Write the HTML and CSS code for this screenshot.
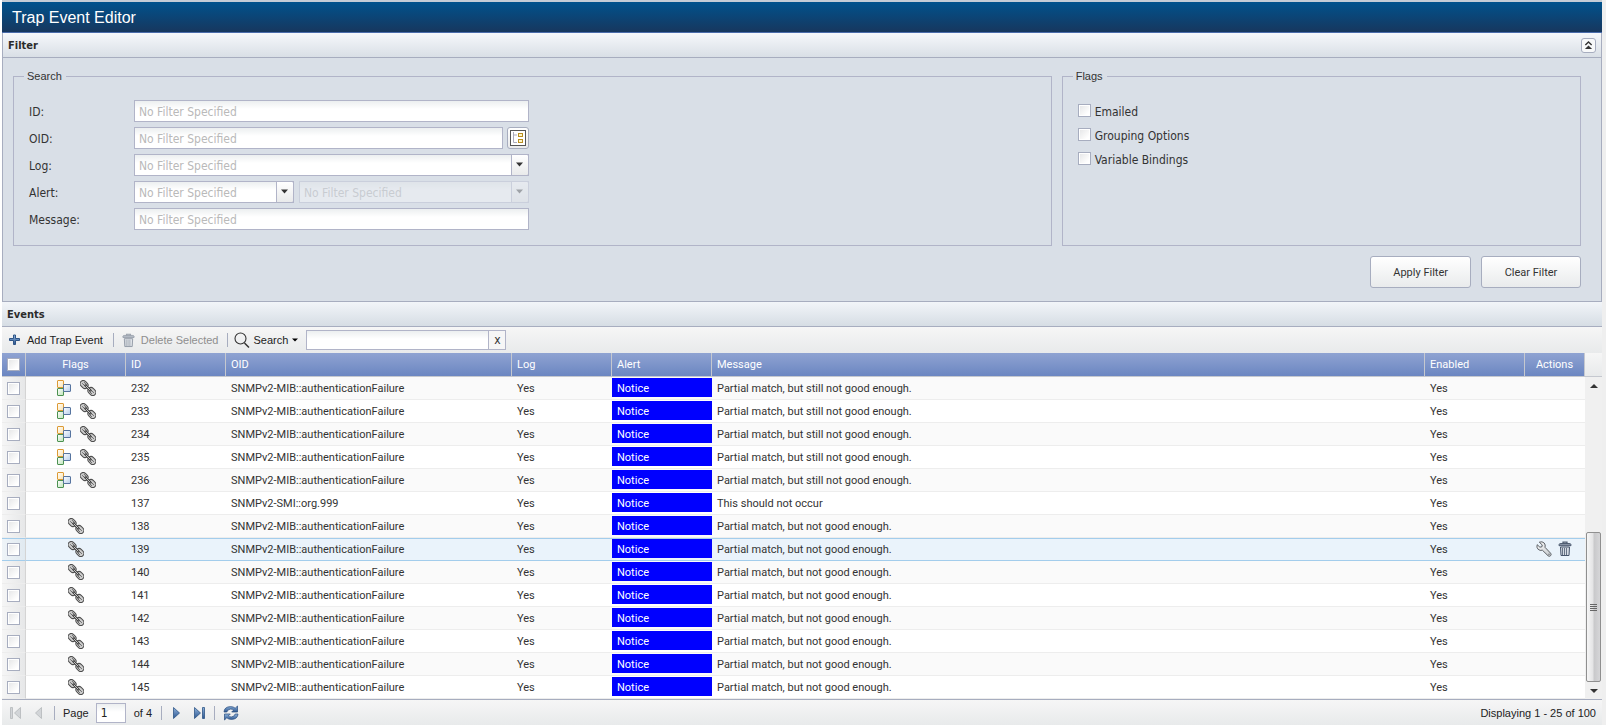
FILE: index.html
```
<!DOCTYPE html>
<html lang="en">
<head>
<meta charset="utf-8">
<title>Trap Event Editor</title>
<link rel="stylesheet" href="styles.css">
</head>
<body>
<svg class="defs" aria-hidden="true">
  <defs>
    <linearGradient id="g-steel" x1="0" y1="0" x2="0" y2="1"><stop offset="0" stop-color="#8fb3dc"/><stop offset="1" stop-color="#2c5690"/></linearGradient>
    <linearGradient id="g-metal" x1="0" y1="0" x2="1" y2="1"><stop offset="0" stop-color="#fdfdfd"/><stop offset="1" stop-color="#c4c8cc"/></linearGradient>
    <linearGradient id="g-blue" x1="0" y1="0" x2="1" y2="1"><stop offset="0" stop-color="#fff"/><stop offset="1" stop-color="#b5cdea"/></linearGradient>
    <linearGradient id="g-green" x1="0" y1="0" x2="1" y2="1"><stop offset="0" stop-color="#fff"/><stop offset="1" stop-color="#bfe3bb"/></linearGradient>
    <linearGradient id="g-gold" x1="0" y1="0" x2="1" y2="1"><stop offset="0" stop-color="#fff"/><stop offset="1" stop-color="#fbe3ae"/></linearGradient>
  </defs>
  <symbol id="i-group" viewBox="0 0 16 16">
    <rect x="1.500" y=".5" width="6" height="7" rx=".5" fill="url(#g-gold)" stroke="#dc9a35"/>
    <rect x="1.500" y="8.500" width="6" height="7" rx=".5" fill="url(#g-green)" stroke="#4b9150"/>
    <rect x="7.500" y="4.500" width="7" height="7" rx=".5" fill="url(#g-blue)" stroke="#56749f"/>
  </symbol>
  <symbol id="i-chain" viewBox="0 0 16 16">
    <g fill="#cdcdcd" stroke="#4e4e4e">
      <rect x="-.2" y="1.400" width="8.600" height="6.200" rx="3.100" transform="rotate(45 4.100 4.500)"/>
      <rect x="7.600" y="8.400" width="8.600" height="6.200" rx="3.100" transform="rotate(45 11.900 11.500)"/>
    </g>
    <g fill="none" stroke="#5c5c5c" stroke-width=".9">
      <path d="M2.200 3.300l3.400 3.200M4 2.100l2.800 2.900M10.200 9.500l3.700 3.300M9.300 11.300l2.600 2.600"/>
    </g>
    <path d="M5.500 5.500l5 5" stroke="#3f3f3f" stroke-width="2.400" stroke-linecap="round"/>
    <path d="M6 6l4 4" stroke="#d6d6d6" stroke-width=".9" stroke-linecap="round"/>
  </symbol>
  <symbol id="i-trash" viewBox="0 0 14 16">
    <path d="M5 2.500V1.200h4v1.300" fill="none" stroke="#4d5b6f" stroke-width="1.200"/>
    <path d="M1 3.700Q1 2.500 3 2.500h8q2 0 2 1.200v1H1z" fill="#8793a4" stroke="#46546a" stroke-width=".9"/>
    <path d="M2.500 6h9l-.5 8.500H3z" fill="#d5dbe3" stroke="#46546a"/>
    <path d="M4.500 7v7M6.500 7v7M8.500 7v7" stroke="#5a677b" stroke-width=".9"/>
  </symbol>
  <symbol id="i-wrench" viewBox="0 0 16 16">
    <path d="M3.300 1.200Q6.200 0 8.200 2 9.800 3.900 9 6.300l5.600 5.900q1.100 1.300 0 2.500t-2.500.1L6.400 9.200Q4 10 2.100 8.300.2 6.400 1.200 3.700L3.900 6.200 6 5.700 6.200 3.900z" fill="url(#g-metal)" stroke="#5c6065"/>
    <circle cx="13" cy="13.200" r=".7" fill="#65696e"/>
  </symbol>
  <symbol id="i-caret" viewBox="0 0 8 5"><path d="M0 .5h7L3.500 4.500z" fill="currentColor"/></symbol>
</svg>

<header class="titlebar"><h1>Trap Event Editor</h1></header>

<form class="filter">
  <div class="panel-head">
    <h2>Filter</h2>
    <button type="button" class="collapse" aria-label="Collapse filter">
      <svg width="9" height="11" viewBox="0 0 10 11"><path d="M1.500 5L5 1.600 8.500 5" fill="none" stroke="#333" stroke-width="1.500"/><path d="M1 9.500L5 5.500 9 9.500z" fill="#333"/></svg>
    </button>
  </div>
  <div class="filter-body">
    <div class="groups">
      <fieldset>
        <legend>Search</legend>
        <div class="fields">
          <label for="f-id">ID:</label>
          <div class="field"><input id="f-id" class="box" type="text" placeholder="No Filter Specified"></div>
          <label for="f-oid">OID:</label>
          <div class="field">
            <input id="f-oid" class="box" type="text" placeholder="No Filter Specified">
            <button type="button" class="tree" aria-label="Browse OID tree">
              <svg width="16" height="16" viewBox="0 0 16 16"><rect x=".5" y=".5" width="15" height="15" fill="#fff" stroke="#555"/><path d="M3.500 2v10.500H7M3.500 5H7" fill="none" stroke="#aab"/><rect x="8.500" y="3.500" width="4" height="3" fill="#fff6c8" stroke="#b98e22"/><rect x="8.500" y="9.500" width="4" height="3" fill="#fff6c8" stroke="#b98e22"/></svg>
            </button>
          </div>
          <label for="f-log">Log:</label>
          <div class="field">
            <div class="combo"><select id="f-log" class="box"><option>No Filter Specified</option></select><span class="trigger"><svg width="8" height="5"><use href="#i-caret"/></svg></span></div>
          </div>
          <label for="f-alert">Alert:</label>
          <div class="field">
            <div class="combo combo-short"><select id="f-alert" class="box"><option>No Filter Specified</option></select><span class="trigger"><svg width="8" height="5"><use href="#i-caret"/></svg></span></div>
            <div class="combo off"><select class="box" aria-label="Alert value" disabled><option>No Filter Specified</option></select><span class="trigger"><svg width="8" height="5"><use href="#i-caret"/></svg></span></div>
          </div>
          <label for="f-msg">Message:</label>
          <div class="field"><input id="f-msg" class="box" type="text" placeholder="No Filter Specified"></div>
        </div>
      </fieldset>
      <fieldset>
        <legend>Flags</legend>
        <div class="checks">
          <label><input type="checkbox" class="check">Emailed</label>
          <label><input type="checkbox" class="check">Grouping Options</label>
          <label><input type="checkbox" class="check">Variable Bindings</label>
        </div>
      </fieldset>
    </div>
    <div class="actions">
      <button type="button" class="btn">Apply Filter</button>
      <button type="button" class="btn">Clear Filter</button>
    </div>
  </div>
</form>

<main class="events">
  <div class="events-head"><h2>Events</h2></div>
  <div class="toolbar">
    <button type="button" class="tool">
      <svg width="12" height="12" viewBox="0 0 12 12"><path d="M4.500 1h2v3.500h4v2h-4v4h-2v-4h-4v-2h4z" fill="url(#g-steel)" stroke="#2f5586"/></svg>
      Add Trap Event
    </button>
    <span class="sep"></span>
    <button type="button" class="tool" disabled><svg width="13" height="15"><use href="#i-trash"/></svg>Delete Selected</button>
    <span class="sep"></span>
    <button type="button" class="tool tool-search">
      <svg width="16" height="17" viewBox="0 0 16 17"><circle cx="6.500" cy="6.500" r="5.500" fill="none" stroke="#333" stroke-width="1.100"/><path d="M10.500 11l4.500 4.500" stroke="#333" stroke-width="1.500"/></svg>
      Search
      <svg class="caret" width="6" height="4" viewBox="0 0 6 4"><path d="M0 .5h6L3 3.500z"/></svg>
    </button>
    <div class="quick"><input type="text" aria-label="Search events"><button type="button" aria-label="Clear search">x</button></div>
  </div>

  <div class="grid">
    <table>
      <colgroup><col class="c-check"><col class="c-std"><col class="c-std"><col class="c-oid"><col class="c-std"><col class="c-std"><col><col class="c-std"><col class="c-act"></colgroup>
      <thead>
        <tr><th><input type="checkbox" class="check" aria-label="Select all"></th><th class="mid">Flags</th><th>ID</th><th>OID</th><th>Log</th><th>Alert</th><th>Message</th><th>Enabled</th><th class="mid">Actions</th></tr>
      </thead>
      <tbody>
        <tr><td><input type="checkbox" class="check" aria-label="Select 232"></td><td><div class="flags"><svg width="16" height="16"><use href="#i-group"/></svg><svg width="16" height="16"><use href="#i-chain"/></svg></div></td><td>232</td><td>SNMPv2-MIB::authenticationFailure</td><td>Yes</td><td><span class="notice">Notice</span></td><td>Partial match, but still not good enough.</td><td>Yes</td><td></td></tr>
        <tr><td><input type="checkbox" class="check" aria-label="Select 233"></td><td><div class="flags"><svg width="16" height="16"><use href="#i-group"/></svg><svg width="16" height="16"><use href="#i-chain"/></svg></div></td><td>233</td><td>SNMPv2-MIB::authenticationFailure</td><td>Yes</td><td><span class="notice">Notice</span></td><td>Partial match, but still not good enough.</td><td>Yes</td><td></td></tr>
        <tr><td><input type="checkbox" class="check" aria-label="Select 234"></td><td><div class="flags"><svg width="16" height="16"><use href="#i-group"/></svg><svg width="16" height="16"><use href="#i-chain"/></svg></div></td><td>234</td><td>SNMPv2-MIB::authenticationFailure</td><td>Yes</td><td><span class="notice">Notice</span></td><td>Partial match, but still not good enough.</td><td>Yes</td><td></td></tr>
        <tr><td><input type="checkbox" class="check" aria-label="Select 235"></td><td><div class="flags"><svg width="16" height="16"><use href="#i-group"/></svg><svg width="16" height="16"><use href="#i-chain"/></svg></div></td><td>235</td><td>SNMPv2-MIB::authenticationFailure</td><td>Yes</td><td><span class="notice">Notice</span></td><td>Partial match, but still not good enough.</td><td>Yes</td><td></td></tr>
        <tr><td><input type="checkbox" class="check" aria-label="Select 236"></td><td><div class="flags"><svg width="16" height="16"><use href="#i-group"/></svg><svg width="16" height="16"><use href="#i-chain"/></svg></div></td><td>236</td><td>SNMPv2-MIB::authenticationFailure</td><td>Yes</td><td><span class="notice">Notice</span></td><td>Partial match, but still not good enough.</td><td>Yes</td><td></td></tr>
        <tr><td><input type="checkbox" class="check" aria-label="Select 137"></td><td></td><td>137</td><td>SNMPv2-SMI::org.999</td><td>Yes</td><td><span class="notice">Notice</span></td><td>This should not occur</td><td>Yes</td><td></td></tr>
        <tr><td><input type="checkbox" class="check" aria-label="Select 138"></td><td><div class="flags"><svg width="16" height="16"><use href="#i-chain"/></svg></div></td><td>138</td><td>SNMPv2-MIB::authenticationFailure</td><td>Yes</td><td><span class="notice">Notice</span></td><td>Partial match, but not good enough.</td><td>Yes</td><td></td></tr>
        <tr class="over"><td><input type="checkbox" class="check" aria-label="Select 139"></td><td><div class="flags"><svg width="16" height="16"><use href="#i-chain"/></svg></div></td><td>139</td><td>SNMPv2-MIB::authenticationFailure</td><td>Yes</td><td><span class="notice">Notice</span></td><td>Partial match, but not good enough.</td><td>Yes</td><td><div class="row-actions"><button type="button" aria-label="Edit"><svg width="16" height="16"><use href="#i-wrench"/></svg></button><button type="button" aria-label="Delete"><svg width="14" height="16"><use href="#i-trash"/></svg></button></div></td></tr>
        <tr><td><input type="checkbox" class="check" aria-label="Select 140"></td><td><div class="flags"><svg width="16" height="16"><use href="#i-chain"/></svg></div></td><td>140</td><td>SNMPv2-MIB::authenticationFailure</td><td>Yes</td><td><span class="notice">Notice</span></td><td>Partial match, but not good enough.</td><td>Yes</td><td></td></tr>
        <tr><td><input type="checkbox" class="check" aria-label="Select 141"></td><td><div class="flags"><svg width="16" height="16"><use href="#i-chain"/></svg></div></td><td>141</td><td>SNMPv2-MIB::authenticationFailure</td><td>Yes</td><td><span class="notice">Notice</span></td><td>Partial match, but not good enough.</td><td>Yes</td><td></td></tr>
        <tr><td><input type="checkbox" class="check" aria-label="Select 142"></td><td><div class="flags"><svg width="16" height="16"><use href="#i-chain"/></svg></div></td><td>142</td><td>SNMPv2-MIB::authenticationFailure</td><td>Yes</td><td><span class="notice">Notice</span></td><td>Partial match, but not good enough.</td><td>Yes</td><td></td></tr>
        <tr><td><input type="checkbox" class="check" aria-label="Select 143"></td><td><div class="flags"><svg width="16" height="16"><use href="#i-chain"/></svg></div></td><td>143</td><td>SNMPv2-MIB::authenticationFailure</td><td>Yes</td><td><span class="notice">Notice</span></td><td>Partial match, but not good enough.</td><td>Yes</td><td></td></tr>
        <tr><td><input type="checkbox" class="check" aria-label="Select 144"></td><td><div class="flags"><svg width="16" height="16"><use href="#i-chain"/></svg></div></td><td>144</td><td>SNMPv2-MIB::authenticationFailure</td><td>Yes</td><td><span class="notice">Notice</span></td><td>Partial match, but not good enough.</td><td>Yes</td><td></td></tr>
        <tr><td><input type="checkbox" class="check" aria-label="Select 145"></td><td><div class="flags"><svg width="16" height="16"><use href="#i-chain"/></svg></div></td><td>145</td><td>SNMPv2-MIB::authenticationFailure</td><td>Yes</td><td><span class="notice">Notice</span></td><td>Partial match, but not good enough.</td><td>Yes</td><td></td></tr>
      </tbody>
    </table>
    <div class="scroll" aria-hidden="true">
      <div class="scroll-head"></div>
      <div class="scroll-arrow"><svg width="8" height="4" viewBox="0 0 8 4"><path d="M4 0l4 4H0z" fill="#333"/></svg></div>
      <div class="scroll-track"><div class="thumb"><i></i><i></i><i></i><i></i></div></div>
      <div class="scroll-arrow"><svg width="8" height="4" viewBox="0 0 8 4"><path d="M4 4L0 0h8z" fill="#333"/></svg></div>
    </div>
  </div>

  <footer class="pager">
    <button type="button" aria-label="First page" disabled><svg width="11" height="12" viewBox="0 0 11 12"><path d="M.5 .5h2v11h-2zM10.500 .5v11L4.500 6z" fill="#d2d5d8" stroke="#b4b7ba" stroke-width=".8"/></svg></button>
    <button type="button" class="prev" aria-label="Previous page" disabled><svg width="7" height="12" viewBox="0 0 7 12"><path d="M6.500 .5v11L.5 6z" fill="#d2d5d8" stroke="#b4b7ba" stroke-width=".8"/></svg></button>
    <span class="sep"></span>
    <label for="page">Page</label>
    <input id="page" type="text" value="1">
    <span>of 4</span>
    <span class="sep"></span>
    <button type="button" class="next" aria-label="Next page"><svg width="7" height="12" viewBox="0 0 7 12"><path d="M.5 .5v11L6.500 6z" fill="url(#g-steel)" stroke="#2f5586" stroke-width=".8"/></svg></button>
    <button type="button" class="last" aria-label="Last page"><svg width="11" height="12" viewBox="0 0 11 12"><path d="M.5 .5v11L6.500 6zM8.500 .5h2v11h-2z" fill="url(#g-steel)" stroke="#2f5586" stroke-width=".8"/></svg></button>
    <span class="sep"></span>
    <button type="button" aria-label="Refresh"><svg width="16" height="16" viewBox="0 0 16 16"><g fill="url(#g-steel)" stroke="#274b7c" stroke-width=".7"><path d="M1 7Q1.300 1.800 7.500 1.600q3 0 4.700 1.600L14.500 1v6H8.700l2-2Q9.500 4 7.500 4.100 4.700 4.200 3.800 7z"/><path d="M15 9q-.3 5.200-6.500 5.400-3 0-4.700-1.600L1.500 15V9h5.800l-2 2q1.200 1 3.200.9Q11.300 11.800 12.200 9z"/></g></svg></button>
    <span class="status">Displaying 1 - 25 of 100</span>
  </footer>
</main>
</body>
</html>
```
FILE: styles.css
```
* { box-sizing: border-box; }

body {
  margin: 0;
  padding: 0 4px 0 0;
  border-left: 2px solid #fff;
  background: #efefef;
  color: #333;
  font: 11px/16px "Liberation Sans", Arial, sans-serif;
}

h1, h2 { margin: 0; }
svg { display: block; flex: none; }
.defs { position: absolute; width: 0; height: 0; }

button, input, select { font: inherit; color: inherit; margin: 0; }
button { padding: 0; border: 0; background: none; }

/* Title */
.titlebar {
  display: flex;
  align-items: center;
  height: 33px;
  padding: 1px 10px 0;
  border-top: 2px solid #c3ccd6;
  border-bottom: 1px solid #4a6cab;
  background: linear-gradient(#00528d, #17375e);
  color: #fff;
}
.titlebar h1 { font-size: 16px; font-weight: 400; }

/* Filter panel */
.filter { border: 1px solid #a7adbf; border-top: 0; background: #d9dfe7; }
.panel-head, .events-head {
  display: flex;
  align-items: center;
  justify-content: space-between;
  height: 25px;
  padding: 1px 5px 0 5px;
  border-bottom: 1px solid #a7adbf;
  background: linear-gradient(#f6f8fb, #d9dfe6);
}
.events-head { background: linear-gradient(#f2f5f9, #d6dde4); }
h2 { font: 700 11px/16px "DejaVu Sans Condensed", "Noto Sans", sans-serif; color: #2b2b2b; }
.collapse {
  display: grid;
  place-items: center;
  width: 15px;
  height: 15px;
  border: 1px solid #a7adbf;
  border-radius: 3px;
  background: #f8f9fa;
}
.filter-body { padding: 10px 20px 13px 10px; }
.groups { display: grid; grid-template-columns: 2fr 1fr; gap: 10px; }
fieldset { min-width: 0; margin: 0; padding: 16px 15px 15px; border: 1px solid #b1b4c8; }
legend { margin-left: -5px; padding: 0 4px 0 3px; }
.fields {
  display: grid;
  grid-template-columns: 105px minmax(0, 395px);
  row-gap: 5px;
  align-items: center;
  font: 12px/16px "DejaVu Sans Condensed", "Noto Sans", sans-serif;
}
.fields > label { padding-top: 2px; }
.field { display: flex; gap: 4px; }
.box {
  flex: 1;
  min-width: 0;
  width: 100%;
  height: 22px;
  padding: 2px 4px 0;
  border: 1px solid #b1b4c8;
  border-radius: 0;
  background: linear-gradient(#eceff0, #fff 8px);
  color: #b9b9b9;
  appearance: none;
}
.box::placeholder { color: #b9b9b9; opacity: 1; }
.combo { position: relative; display: flex; flex: 1; }
.combo-short { flex: 0 0 160px; margin-right: 1px; }
.trigger {
  position: absolute;
  top: 0;
  right: 0;
  display: flex;
  justify-content: center;
  width: 18px;
  height: 22px;
  padding-top: 7px;
  border: 1px solid #b1b4c8;
  border-radius: 0 2px 2px 0;
  background: linear-gradient(#fff, #e9eaeb);
  pointer-events: none;
}
.off { opacity: .35; }
.off .box { opacity: 1; color: #aaa; }
.tree {
  display: grid;
  place-items: center;
  width: 22px;
  height: 22px;
  border: 1px solid #a7adbf;
  border-radius: 3px;
  background: linear-gradient(#fff, #e9eaeb);
}

.check {
  display: block;
  flex: none;
  width: 13px;
  height: 13px;
  border: 1px solid #a7adbf;
  border-radius: 0;
  background: linear-gradient(135deg, #e4e5e6, #fff 80%);
  box-shadow: inset 0 0 0 1px #fff;
  appearance: none;
}
.checks { display: grid; gap: 8px; padding-top: 4px; font: 12px/16px "DejaVu Sans Condensed", "Noto Sans", sans-serif; }
.checks label { display: flex; align-items: flex-start; gap: 4px; }

.actions { display: flex; justify-content: flex-end; gap: 10px; margin-top: 10px; }
.btn {
  min-width: 100px;
  height: 32px;
  padding: 2px 22px 0;
  border: 1px solid #a7adbf;
  border-radius: 3px;
  background: linear-gradient(#fff, #e9ebec);
  font-family: Roboto, "Noto Sans", sans-serif;
}

/* Toolbar */
.toolbar {
  display: flex;
  align-items: center;
  height: 26px;
  padding-left: 7px;
  background: linear-gradient(#f6f6f6, #e8eaeb);
}
.tool { display: flex; align-items: center; gap: 6px; color: #222; }
.tool:disabled { color: #8e8e8e; }
.tool:disabled svg { opacity: .55; }
.tool-search { gap: 4px; }
.sep { width: 1px; height: 14px; margin: 0 9px; background: #a7adbf; }
.toolbar .sep { margin: 0 8px 0 10px; }
.toolbar .tool:disabled + .sep { margin: 0 6px 0 8px; }
.quick { display: flex; margin-left: 8px; height: 20px; }
.quick input {
  width: 183px;
  padding: 0 4px;
  border: 1px solid #b1b4c8;
  background: linear-gradient(#eceff0, #fff 8px);
}
.quick button { width: 17px; border: 1px solid #b1b4c8; border-left: 0; background: #f6f6f6; font: 12px/16px "DejaVu Sans Condensed", "Noto Sans", sans-serif; }

/* Grid */
.grid { display: flex; background: #fff; font-family: Roboto, "Noto Sans", sans-serif; }
table { flex: 1; min-width: 0; table-layout: fixed; border-collapse: separate; border-spacing: 0; }
.c-check { width: 24px; }
.c-std { width: 100px; }
.c-oid { width: 286px; }
.c-act { width: 60px; }
th {
  height: 24px;
  padding: 1px 5px 0;
  border-right: 1px solid #c5c8cf;
  border-bottom: 1px solid #c5c8cf;
  background: linear-gradient(#8fa3d2, #6b86c1);
  color: #fff;
  font-weight: 400;
  text-align: left;
}
th:first-child { padding-top: 0; }
th.mid { text-align: center; }
td { height: 23px; padding: 2px 5px 0; border-bottom: 1px solid #ededed; white-space: nowrap; color: #333; }
tbody tr:nth-child(odd) { background: #fafafa; }
td:first-child { padding-top: 0; border-right: 1px solid #d4d4d4; background: linear-gradient(90deg, #f6f6f6, #e6e7e8); }
td:nth-child(2), td:last-child { padding: 0 5px 1px; }
td:nth-child(6) { padding: 1px 0 0; vertical-align: top; }
tbody tr.over { background: #eaf3fb; }
tr.over td { padding-top: 0; border-top: 1px solid #a3cdec; border-bottom-color: #a3cdec; }
tr.over td:first-child { background: linear-gradient(90deg, #eff4f8, #e0e9f0); }
tr.over td:last-child { padding: 0 6px 2px 4px; }
.flags { display: flex; justify-content: center; gap: 8px; }
.notice { display: block; height: 19px; padding: 2px 5px 0; background: #00f; color: #fff; line-height: 17px; }
.row-actions { display: flex; justify-content: center; gap: 6px; }

/* Scroll bar */
.scroll { display: flex; flex-direction: column; width: 17px; background: #f0f0f0; }
.scroll-head { height: 24px; border-bottom: 1px solid #c5c8cf; background: linear-gradient(#f6f6f6, #e8eaeb); }
.scroll-arrow { display: grid; place-items: center; height: 17px; }
.scroll-track { display: flex; flex: 1; flex-direction: column; justify-content: flex-end; padding: 0 1px; }
.thumb {
  display: flex;
  flex-direction: column;
  align-items: center;
  justify-content: center;
  gap: 1px;
  height: 52%;
  border: 1px solid #8f8f8f;
  border-radius: 2px;
  background: linear-gradient(90deg, #f6f6f6, #e4e4e5 45%, #c9c9cb 55%, #d6d6d8);
}
.thumb i { width: 7px; height: 1px; background: #666; }

/* Pager */
.pager {
  display: flex;
  align-items: center;
  height: 26px;
  padding: 0 6px 0 8px;
  border-top: 1px solid #a7adbf;
  background: linear-gradient(#f6f6f6, #e8eaeb);
  color: #222;
}
.prev { margin: 0 3px 0 14px; }
.pager .sep { margin: 0 8px 0 9px; }
.pager input {
  width: 30px;
  height: 20px;
  margin: 0 8px 0 7px;
  padding: 0 4px;
  border: 1px solid #b1b4c8;
  background: linear-gradient(#eceff0, #fff 8px);
  font: 12px/16px "DejaVu Sans Condensed", "Noto Sans", sans-serif;
}
.next { margin: 0 14px 0 3px; }
.status { margin-left: auto; }
```
